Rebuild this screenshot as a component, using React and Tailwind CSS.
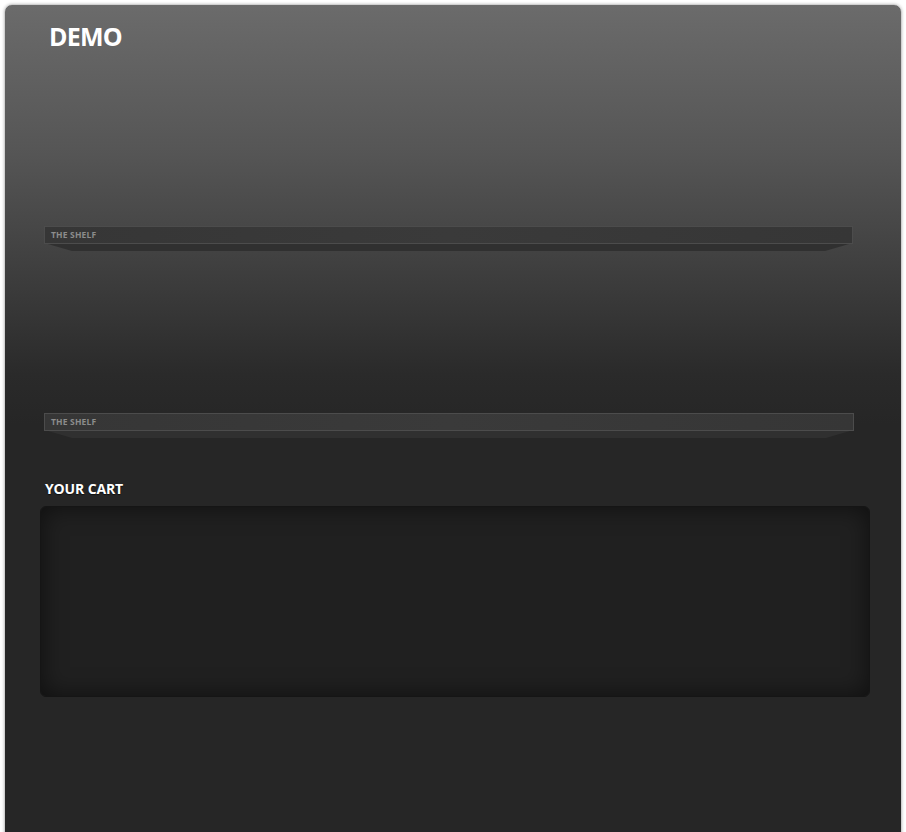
import React from "react";

function Shelf() {
  return (
    <div className="relative">
      <div className="h-[18px] bg-[linear-gradient(90deg,#363636,#3a3a3a_50%,#363636)] border border-[#4c4c4c] flex items-center pl-[6px]">
        <span className="text-[8.5px] font-bold text-[#8c8c8c] tracking-[0.02em] leading-none [font-family:'Open_Sans',sans-serif]">THE SHELF</span>
      </div>
      <div className="h-[7px] mx-[4px] bg-[#303030] [clip-path:polygon(0_0,100%_0,97%_100%,3%_100%)]" />
    </div>
  );
}

export default function App() {
  return (
    <div className="bg-white min-h-[832px] p-[4px] overflow-hidden">
      <div className="rounded-t-[8px] border border-[#d0d0d0] shadow-[0_0_3px_rgba(0,0,0,0.25)] bg-[linear-gradient(180deg,#6b6b6b_0px,#555555_150px,#2a2a2a_370px,#262626_420px)] min-h-[840px] [font-family:'Open_Sans',sans-serif]">
        <div className="pl-[44px] pt-[14px]">
          <h1 className="text-[25px] font-bold text-white leading-[34px] tracking-[-0.03em]">DEMO</h1>
        </div>
        <div className="ml-[39px] w-[809px] mt-[173px]">
          <Shelf />
        </div>
        <div className="ml-[39px] w-[810px] mt-[162px]">
          <Shelf />
        </div>
        <div className="pl-[40px] mt-[41px]">
          <h2 className="text-[14px] font-bold text-white leading-[20px] tracking-[-0.01em] [text-shadow:0_1px_1px_rgba(0,0,0,0.6)]">YOUR CART</h2>
        </div>
        <div className="ml-[35px] mr-[31px] mt-[7px] h-[191px] rounded-[6px] bg-[#202020] border border-[#151515] shadow-[inset_0_0_24px_rgba(0,0,0,0.55)]" />
      </div>
    </div>
  );
}
